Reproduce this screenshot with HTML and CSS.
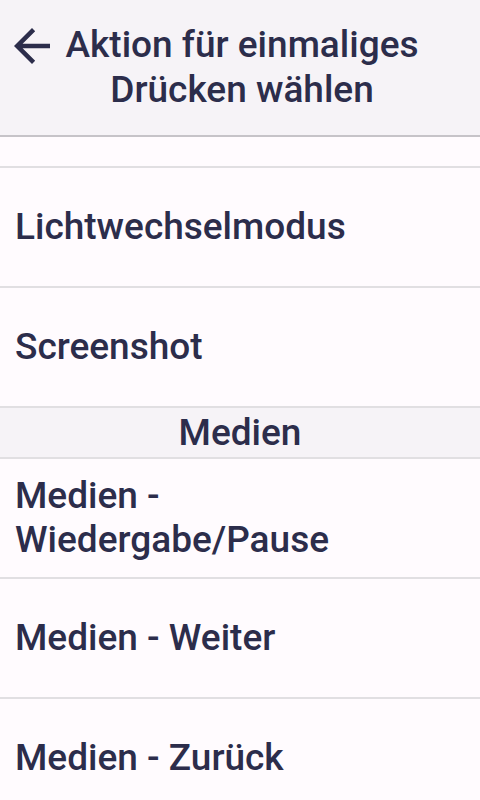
FILE: index.html
```html
<!DOCTYPE html>
<html lang="de">
<head>
<meta charset="utf-8">
<link rel="stylesheet" href="styles.css">
</head>
<body>
<header class="appbar">
  <svg class="back" viewBox="4 4 16 16" width="36" height="36" aria-hidden="true"><path d="M20 11H7.83l5.59-5.59L12 4l-8 8 8 8 1.41-1.41L7.83 13H20v-2z"/></svg>
  <h1 class="title">Aktion für einmaliges Drücken wählen</h1>
</header>
<main class="list">
  <div class="item partial"></div>
  <div class="item"><span>Lichtwechselmodus</span></div>
  <div class="item"><span>Screenshot</span></div>
  <div class="section">Medien</div>
  <div class="item"><span>Medien - Wiedergabe/Pause</span></div>
  <div class="item"><span>Medien - Weiter</span></div>
  <div class="item"><span>Medien - Zurück</span></div>
</main>
</body>
</html>
```
FILE: styles.css
```css
html, body {
  margin: 0;
  padding: 0;
}
body {
  width: 480px;
  height: 800px;
  overflow: hidden;
  background: #fffbfe;
  font-family: Roboto, "Noto Sans", sans-serif;
  font-weight: 500;
  color: #2c2d4b;
}
.appbar {
  display: flex;
  align-items: flex-start;
  height: 137px;
  box-sizing: border-box;
  padding: 22px 0 0 14px;
  background: #f6f3f7;
  border-bottom: 2px solid #c6c3c8;
}
.back {
  flex: none;
  fill: #2c2d4b;
  margin-top: 6px;
}
.title {
  flex: 1;
  margin: 0 56px 0 10px;
  font-size: 37px;
  line-height: 45px;
  font-weight: 500;
  text-align: center;
}
.list {
  display: flex;
  flex-direction: column;
}
.item {
  display: flex;
  align-items: center;
  flex: none;
  height: 118px;
  padding: 0 16px 0 15px;
  border-bottom: 2px solid #e1dfe2;
  font-size: 37px;
  line-height: 44px;
}
.item.partial {
  height: 29px;
}
.section {
  flex: none;
  height: 49px;
  border-top: 2px solid #e1dfe2;
  margin-top: -2px;
  border-bottom: 2px solid #e1dfe2;
  background: #f6f3f7;
  font-size: 37px;
  line-height: 49px;
  text-align: center;
}
```
